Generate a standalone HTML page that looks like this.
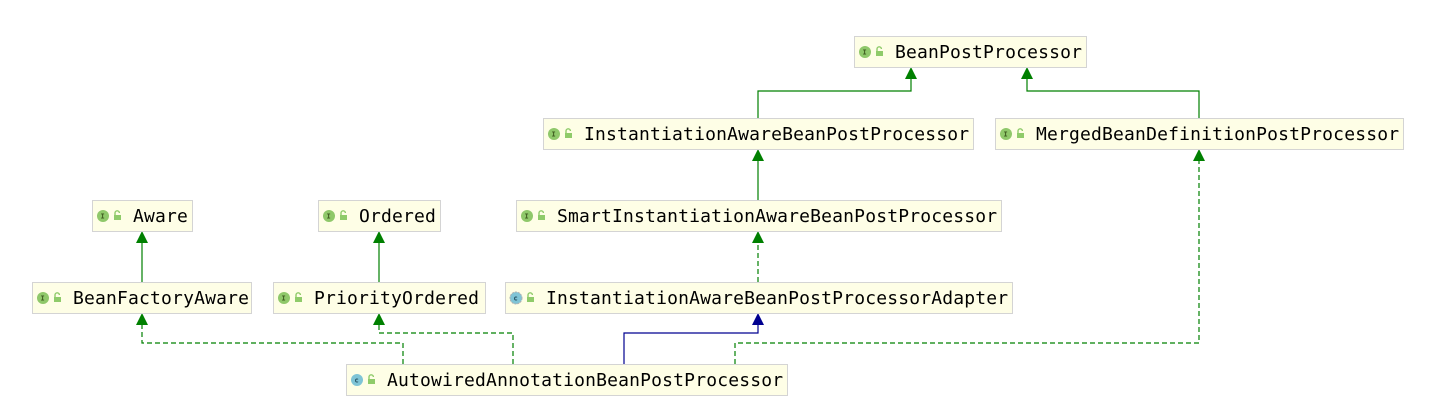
<!DOCTYPE html>
<html><head><style>
html,body{margin:0;padding:0;background:#fff;}
svg{display:block}
text{font-family:"DejaVu Sans Mono","Liberation Mono",monospace;font-size:18px;fill:#000;letter-spacing:0.17px}
.ic{font-family:"DejaVu Sans Mono",monospace;font-size:7px;font-weight:bold;fill:#3d5a1e;letter-spacing:0}
</style></head><body>
<svg width="1443" height="419" viewBox="0 0 1443 419" xmlns="http://www.w3.org/2000/svg">
<defs>
<g id="lock"><rect x="0" y="4" width="7" height="5" fill="#8fcb6a"/><path d="M1 4.5 V2 a2.2 2.2 0 0 1 4.4 0" fill="none" stroke="#8fcb6a" stroke-width="1.4"/></g>
</defs>
<g fill="none" stroke-width="1.2">
<path d="M142 282 V240 M379 282 V240 M758 118 V91 H911 V76 M1199 118 V91 H1027 V76 M758 200 V158" stroke="#008000"/>
<path d="M758 282 V240 M735 364 V343 H1199 V158 M403 364 V343 H142 V322 M513 364 V333 H379 V322" stroke="#008000" stroke-dasharray="5,3"/>
<path d="M624 364 V333 H758 V322" stroke="#000090"/>
</g>
<g fill="#008000">
<path d="M142 231 l-6 12 h12z"/><path d="M379 231 l-6 12 h12z"/>
<path d="M911 67 l-6 12 h12z"/><path d="M1027 67 l-6 12 h12z"/>
<path d="M758 149 l-6 12 h12z"/><path d="M1199 149 l-6 12 h12z"/>
<path d="M758 231 l-6 12 h12z"/>
<path d="M142 313 l-6 12 h12z"/><path d="M379 313 l-6 12 h12z"/>
</g>
<path d="M758 313 l-6 12 h12z" fill="#000090"/>

<g>
<g transform="translate(854,36)"><rect x="0.5" y="0.5" width="232" height="31" fill="#fefee6" stroke="#d4d4d4"/><circle cx="11" cy="16" r="6" fill="#8fc86a"/><text class="ic" x="8.5" y="18.5">I</text><use href="#lock" x="22" y="11"/><text x="41" y="22">BeanPostProcessor</text></g>
<g transform="translate(543,118)"><rect x="0.5" y="0.5" width="430" height="31" fill="#fefee6" stroke="#d4d4d4"/><circle cx="11" cy="16" r="6" fill="#8fc86a"/><text class="ic" x="8.5" y="18.5">I</text><use href="#lock" x="22" y="11"/><text x="41" y="22">InstantiationAwareBeanPostProcessor</text></g>
<g transform="translate(995,118)"><rect x="0.5" y="0.5" width="408" height="31" fill="#fefee6" stroke="#d4d4d4"/><circle cx="11" cy="16" r="6" fill="#8fc86a"/><text class="ic" x="8.5" y="18.5">I</text><use href="#lock" x="22" y="11"/><text x="41" y="22">MergedBeanDefinitionPostProcessor</text></g>
<g transform="translate(92,200)"><rect x="0.5" y="0.5" width="100" height="31" fill="#fefee6" stroke="#d4d4d4"/><circle cx="11" cy="16" r="6" fill="#8fc86a"/><text class="ic" x="8.5" y="18.5">I</text><use href="#lock" x="22" y="11"/><text x="41" y="22">Aware</text></g>
<g transform="translate(318,200)"><rect x="0.5" y="0.5" width="122" height="31" fill="#fefee6" stroke="#d4d4d4"/><circle cx="11" cy="16" r="6" fill="#8fc86a"/><text class="ic" x="8.5" y="18.5">I</text><use href="#lock" x="22" y="11"/><text x="41" y="22">Ordered</text></g>
<g transform="translate(516,200)"><rect x="0.5" y="0.5" width="485" height="31" fill="#fefee6" stroke="#d4d4d4"/><circle cx="11" cy="16" r="6" fill="#8fc86a"/><text class="ic" x="8.5" y="18.5">I</text><use href="#lock" x="22" y="11"/><text x="41" y="22">SmartInstantiationAwareBeanPostProcessor</text></g>
<g transform="translate(32,282)"><rect x="0.5" y="0.5" width="219" height="31" fill="#fefee6" stroke="#d4d4d4"/><circle cx="11" cy="16" r="6" fill="#8fc86a"/><text class="ic" x="8.5" y="18.5">I</text><use href="#lock" x="22" y="11"/><text x="41" y="22">BeanFactoryAware</text></g>
<g transform="translate(273,282)"><rect x="0.5" y="0.5" width="212" height="31" fill="#fefee6" stroke="#d4d4d4"/><circle cx="11" cy="16" r="6" fill="#8fc86a"/><text class="ic" x="8.5" y="18.5">I</text><use href="#lock" x="22" y="11"/><text x="41" y="22">PriorityOrdered</text></g>
<g transform="translate(505,282)"><rect x="0.5" y="0.5" width="507" height="31" fill="#fefee6" stroke="#d4d4d4"/><circle cx="11" cy="16" r="6" fill="#7fc4d6" stroke="#b0b0b0" stroke-width="1" stroke-dasharray="2,1"/><text class="ic" x="8.5" y="18.5" style="fill:#1e4a5a">c</text><use href="#lock" x="22" y="11"/><text x="41" y="22">InstantiationAwareBeanPostProcessorAdapter</text></g>
<g transform="translate(346,364)"><rect x="0.5" y="0.5" width="441" height="31" fill="#fefee6" stroke="#d4d4d4"/><circle cx="11" cy="16" r="6" fill="#7fc4d6"/><text class="ic" x="8.5" y="18.5" style="fill:#1e4a5a">c</text><use href="#lock" x="22" y="11"/><text x="41" y="22">AutowiredAnnotationBeanPostProcessor</text></g>
</g>
</svg>
</body></html>
